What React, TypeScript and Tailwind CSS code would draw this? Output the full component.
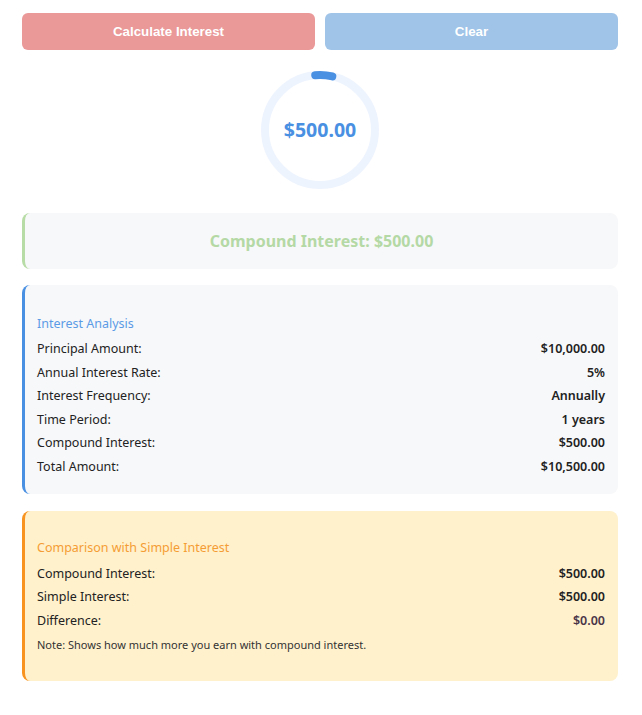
import React from "react";

const rowsA = [
  ["Principal Amount:", "$10,000.00"],
  ["Annual Interest Rate:", "5%"],
  ["Interest Frequency:", "Annually"],
  ["Time Period:", "1 years"],
  ["Compound Interest:", "$500.00"],
  ["Total Amount:", "$10,500.00"],
];

function Row({ k, v, vc }: { k: string; v: string; vc?: string }) {
  return (
    <div className="flex justify-between text-[12.5px] leading-[17.6px] py-[3px]">
      <span>{k}</span>
      <span className={"font-semibold " + (vc ?? "")}>{v}</span>
    </div>
  );
}

export default function App() {
  const r = 55;
  const c = 2 * Math.PI * r;
  const frac = 0.05;
  return (
    <div
      className="bg-white min-h-[715px] pl-[22px] pr-[24px] pt-[13px] text-[#222]"
      style={{ fontFamily: '"Noto Sans", "Open Sans", sans-serif' }}
    >
      <div className="flex gap-[10px]">
        <button
          className="flex-1 h-[37px] rounded-[6px] bg-[#ea9898] text-white font-bold text-[13.33px]"
          style={{ fontFamily: '"Liberation Sans", Arial, sans-serif' }}
        >
          Calculate Interest
        </button>
        <button
          className="flex-1 h-[37px] rounded-[6px] bg-[#a0c4e8] text-white font-bold text-[13.33px]"
          style={{ fontFamily: '"Liberation Sans", Arial, sans-serif' }}
        >
          Clear
        </button>
      </div>

      <div className="flex justify-center mt-[20px]">
        <div className="relative w-[120px] h-[120px]">
          <svg width="120" height="120" viewBox="0 0 120 120">
            <circle cx="60" cy="60" r={r} fill="none" stroke="#eef4fe" strokeWidth="8" />
            <circle
              cx="60"
              cy="60"
              r={r}
              fill="none"
              stroke="#4a90e2"
              strokeWidth="8"
              strokeLinecap="round"
              strokeDasharray={`${c * frac} ${c}`}
              transform="rotate(-95 60 60)"
            />
          </svg>
          <div className="absolute inset-0 flex items-center justify-center text-[#4a90e2] font-bold text-[19.5px]">
            $500.00
          </div>
        </div>
      </div>

      <div className="mt-[23px] h-[56px] rounded-[8px] bg-[#f7f8fa] border-l-[3px] border-[#b8dca6] flex items-center justify-center">
        <span className="text-[#b5d9a5] font-bold text-[16px]">Compound Interest: $500.00</span>
      </div>

      <div className="mt-[16px] rounded-[8px] bg-[#f7f8fa] border-l-[3px] border-[#4a90e2] pl-[12px] pr-[13px] pt-[30px] pb-[15px]">
        <div className="text-[#5b9be6] text-[12.5px] leading-[18px] mb-[4px]">Interest Analysis</div>
        {rowsA.map(([k, v]) => (
          <Row key={k} k={k} v={v} />
        ))}
      </div>

      <div className="mt-[17px] rounded-[8px] bg-[#fff1cc] border-l-[3px] border-[#f7931e] pl-[12px] pr-[13px] pt-[28px] pb-[28px]">
        <div className="text-[#f59d35] text-[12.5px] leading-[18px] mb-[5px]">Comparison with Simple Interest</div>
        <Row k="Compound Interest:" v="$500.00" />
        <Row k="Simple Interest:" v="$500.00" />
        <Row k="Difference:" v="$0.00" vc="text-[#4a3548]" />
        <div className="text-[11px] leading-[16px] mt-[5px] text-[#333]">
          Note: Shows how much more you earn with compound interest.
        </div>
      </div>
    </div>
  );
}
